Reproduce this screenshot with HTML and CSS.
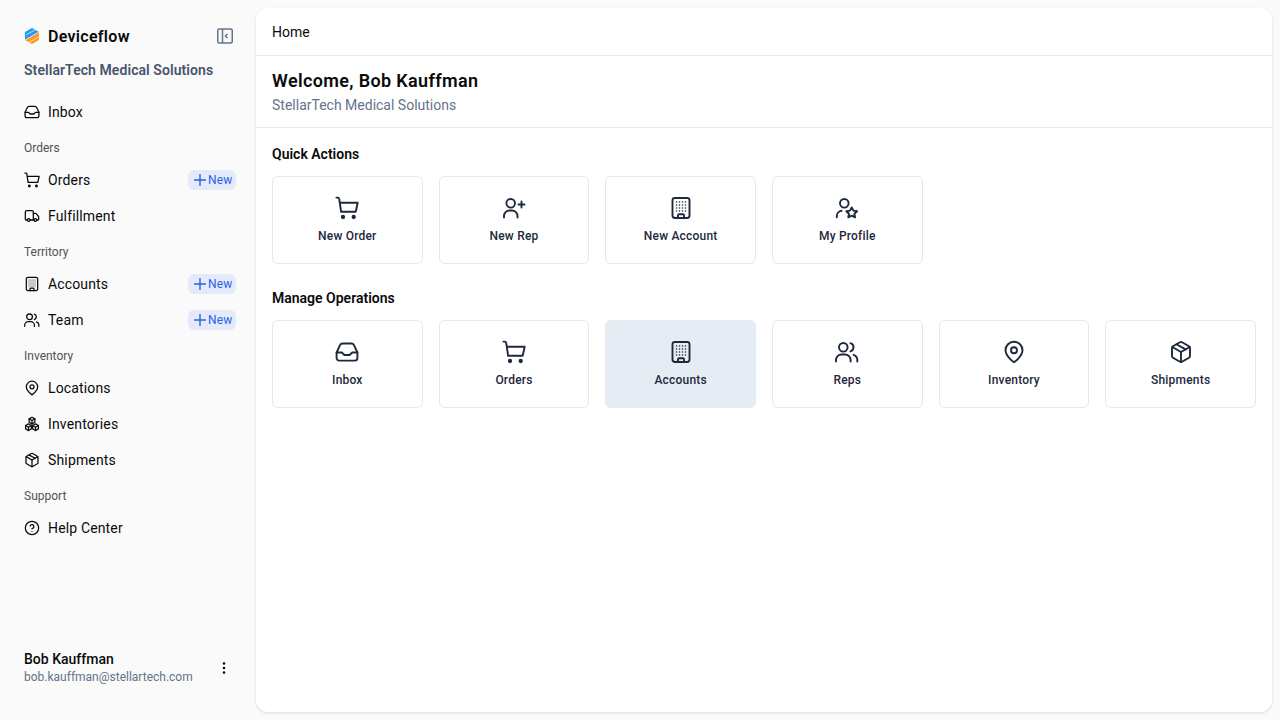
FILE: index.html
```html
<!DOCTYPE html>
<html lang="en">
<head>
    <meta charset="UTF-8">
    <title>Deviceflow</title>
    <link rel="stylesheet" href="styles.css">
</head>
<body>
    <svg class="sprites" width="0" height="0">
        <symbol id="i-cart" viewBox="0 0 24 24"><path d="M1.400 1.600h1.300c.8 0 1.400.5 1.500 1.300l1.900 12.800M4.800 6.700h17.900l-2 9H6"/><circle cx="8" cy="21" r="1.200" fill="currentColor"/><circle cx="18.700" cy="21" r="1.200" fill="currentColor"/></symbol>
        <symbol id="i-inbox" viewBox="0 0 24 24"><path d="M1.600 12.500 5 5.200a3 3 0 0 1 2.600-1.700h8.800A3 3 0 0 1 19 5.200l3.400 7.300V18a2.600 2.600 0 0 1-2.600 2.600H4.200A2.600 2.600 0 0 1 1.600 18z"/><path d="M1.600 12.500h5.200l2.600 2.500h5.200l2.600-2.500h5.200"/></symbol>
        <symbol id="i-truck" viewBox="0 0 24 24"><path d="M14 18V6a2 2 0 0 0-2-2H4a2 2 0 0 0-2 2v11a1 1 0 0 0 1 1h2"/><path d="M15 18H9"/><path d="M19 18h2a1 1 0 0 0 1-1v-3.650a1 1 0 0 0-.22-.624l-3.480-4.350A1 1 0 0 0 17.520 8H14"/><circle cx="17" cy="18" r="2"/><circle cx="7" cy="18" r="2"/></symbol>
        <symbol id="i-building" viewBox="0 0 24 24"><rect x="3.500" y="2" width="17" height="20" rx="2.400"/><path d="M9 22v-2.800a1 1 0 0 1 1-1h4a1 1 0 0 1 1 1V22"/><path class="dots" d="M7.500 6h.01M10.500 6h.01M13.500 6h.01M16.500 6h.01M7.500 9h.01M10.500 9h.01M13.500 9h.01M16.500 9h.01M7.500 12h.01M10.500 12h.01M13.500 12h.01M16.500 12h.01M7.500 15h.01M10.500 15h.01M13.500 15h.01M16.500 15h.01"/></symbol>
        <symbol id="i-users" viewBox="0 0 24 24"><circle cx="8.300" cy="7.300" r="4.300"/><path d="M1 21.500v-1.500a5.500 5.500 0 0 1 5.500-5.500h3.600a5.500 5.500 0 0 1 5.500 5.500v1.500"/><path d="M15.500 3.200a4.300 4.300 0 0 1 0 8.200"/><path d="M18.700 14.800a5.500 5.500 0 0 1 3.600 5.200v1.500"/></symbol>
        <symbol id="i-user-plus" viewBox="0 0 24 24"><circle cx="8.700" cy="7.300" r="4.300"/><path d="M2 21.500V20a5.500 5.500 0 0 1 5.500-5.500h2.500a5.500 5.500 0 0 1 5.500 5.500v1.500"/><path d="M19.500 5.500v6M16.500 8.500h6"/></symbol>
        <symbol id="i-user-star" viewBox="0 0 24 24"><circle cx="9.300" cy="7.300" r="4.300"/><path d="M1.800 21.300V20a5.300 5.300 0 0 1 4.700-5.200"/><path d="m16.700 11.400 1.700 3.200 3.700.6-2.700 2.500.7 3.600-3.400-1.700-3.400 1.700.7-3.600-2.700-2.500 3.700-.6z"/></symbol>
        <symbol id="i-pin" viewBox="0 0 24 24"><path d="M20.500 10.300c0 6-8.500 12-8.500 12s-8.500-6-8.500-12a8.500 8.500 0 0 1 17 0z"/><circle cx="12" cy="10.300" r="3"/></symbol>
        <symbol id="i-boxes" viewBox="0 0 24 24"><path d="m12 1.800 4.300 2.500v5l-4.300 2.500-4.300-2.500v-5z"/><path d="m6.700 11.800 4.300 2.500v5l-4.300 2.500-4.300-2.500v-5z"/><path d="m17.300 11.800 4.300 2.500v5l-4.300 2.500-4.300-2.500v-5z"/><path d="m7.700 4.300 4.300 2.500 4.300-2.500M12 6.800v5M2.400 14.300l4.300 2.500 4.300-2.500M6.700 16.800v5M13 14.300l4.300 2.500 4.300-2.500M17.300 16.800v5"/></symbol>
        <symbol id="i-package" viewBox="0 0 24 24"><path d="M11 21.730a2 2 0 0 0 2 0l7-4A2 2 0 0 0 21 16V8a2 2 0 0 0-1-1.730l-7-4a2 2 0 0 0-2 0l-7 4A2 2 0 0 0 3 8v8a2 2 0 0 0 1 1.730z"/><path d="M12 22V12"/><path d="m3.300 7 8.700 5 8.700-5"/><path d="m7.500 4.270 9 5.150"/></symbol>
        <symbol id="i-help" viewBox="0 0 24 24"><circle cx="12" cy="12" r="10"/><path d="M9.100 9a3 3 0 0 1 5.800 1c0 2-3 3-3 3"/><path d="M12 17h.01"/></symbol>
        <symbol id="i-plus" viewBox="0 0 12 12"><path class="thin" d="M6 .5v11M.5 6h11"/></symbol>
    </svg>

    <aside class="sidebar">
        <div class="brand">
            <svg class="logo" viewBox="0 0 16 16">
                <path fill="#1f9cf0" d="M8 0 15 4 1 12V4z"/>
                <path fill="#ff9a1f" d="M15 4v8l-7 4-7-4z"/>
                <path fill="none" stroke="#fafafa" stroke-width=".7" d="M0 12.600 16 3.400M2 7 13 .7M4 15l11-6.300"/>
            </svg>
            <span class="brand-name">Deviceflow</span>
            <svg class="collapse" viewBox="0 0 16 16">
                <rect x=".75" y="1" width="14.500" height="14" rx="1.500"/>
                <path d="M5.500 1v14M10.500 6 8.500 8l2 2"/>
            </svg>
        </div>
        <div class="org">StellarTech Medical Solutions</div>

        <nav class="nav">
            <a class="nav-item"><svg class="nav-icon"><use href="#i-inbox"/></svg>Inbox</a>
            <div class="nav-label">Orders</div>
            <a class="nav-item"><svg class="nav-icon"><use href="#i-cart"/></svg>Orders<span class="new"><svg class="plus"><use href="#i-plus"/></svg>New</span></a>
            <a class="nav-item"><svg class="nav-icon"><use href="#i-truck"/></svg>Fulfillment</a>
            <div class="nav-label">Territory</div>
            <a class="nav-item"><svg class="nav-icon"><use href="#i-building"/></svg>Accounts<span class="new"><svg class="plus"><use href="#i-plus"/></svg>New</span></a>
            <a class="nav-item"><svg class="nav-icon"><use href="#i-users"/></svg>Team<span class="new"><svg class="plus"><use href="#i-plus"/></svg>New</span></a>
            <div class="nav-label">Inventory</div>
            <a class="nav-item"><svg class="nav-icon"><use href="#i-pin"/></svg>Locations</a>
            <a class="nav-item"><svg class="nav-icon"><use href="#i-boxes"/></svg>Inventories</a>
            <a class="nav-item"><svg class="nav-icon"><use href="#i-package"/></svg>Shipments</a>
            <div class="nav-label">Support</div>
            <a class="nav-item"><svg class="nav-icon"><use href="#i-help"/></svg>Help Center</a>
        </nav>

        <div class="user">
            <div class="user-text">
                <div class="user-name">Bob Kauffman</div>
                <div class="user-email">bob.kauffman@stellartech.com</div>
            </div>
            <svg class="kebab" viewBox="0 0 16 16"><circle cx="8" cy="3.500" r="1.250"/><circle cx="8" cy="8" r="1.250"/><circle cx="8" cy="12.500" r="1.250"/></svg>
        </div>
    </aside>

    <main class="panel">
        <header class="crumb">Home</header>
        <section class="welcome">
            <h1>Welcome, Bob Kauffman</h1>
            <p>StellarTech Medical Solutions</p>
        </section>
        <div class="content">
            <h2>Quick Actions</h2>
            <div class="grid">
                <a class="card"><svg class="card-icon"><use href="#i-cart"/></svg>New Order</a>
                <a class="card"><svg class="card-icon"><use href="#i-user-plus"/></svg>New Rep</a>
                <a class="card"><svg class="card-icon"><use href="#i-building"/></svg>New Account</a>
                <a class="card"><svg class="card-icon"><use href="#i-user-star"/></svg>My Profile</a>
            </div>
            <h2 class="second">Manage Operations</h2>
            <div class="grid">
                <a class="card"><svg class="card-icon"><use href="#i-inbox"/></svg>Inbox</a>
                <a class="card"><svg class="card-icon"><use href="#i-cart"/></svg>Orders</a>
                <a class="card active"><svg class="card-icon"><use href="#i-building"/></svg>Accounts</a>
                <a class="card"><svg class="card-icon"><use href="#i-users"/></svg>Reps</a>
                <a class="card"><svg class="card-icon"><use href="#i-pin"/></svg>Inventory</a>
                <a class="card"><svg class="card-icon"><use href="#i-package"/></svg>Shipments</a>
            </div>
        </div>
    </main>
</body>
</html>
```

FILE: styles.css
```css
* {
    margin: 0;
    padding: 0;
    box-sizing: border-box;
}

body {
    height: 720px;
    display: flex;
    overflow: hidden;
    background-color: #fafafa;
    color: #0a0a0a;
    font-family: "Roboto", "Liberation Sans", sans-serif;
    font-size: 14px;
}

.sprites {
    position: absolute;
}

symbol {
    overflow: visible;
}

symbol path,
symbol circle,
symbol rect {
    stroke-width: 1.9;
    stroke-linecap: round;
    stroke-linejoin: round;
}

symbol .dots {
    stroke-width: 1.6;
}

symbol .thin {
    stroke-width: 1.4;
}

/* sidebar */
.sidebar {
    width: 256px;
    flex-shrink: 0;
    display: flex;
    flex-direction: column;
    padding: 24px 20px 34px 24px;
}

.brand {
    height: 24px;
    display: flex;
    align-items: center;
    gap: 8px;
}

.logo {
    width: 16px;
    height: 16px;
}

.brand-name {
    font-size: 16px;
    font-weight: 600;
    letter-spacing: 0.3px;
}

.collapse {
    width: 16px;
    height: 16px;
    margin-left: auto;
    margin-right: 3px;
    fill: none;
    stroke: #64748b;
    stroke-width: 1.5;
}

.org {
    margin-top: 12px;
    line-height: 20px;
    font-weight: 600;
    letter-spacing: 0.07px;
    color: #475569;
}

.nav {
    margin-top: 14px;
    display: flex;
    flex-direction: column;
}

.nav-item {
    height: 36px;
    display: flex;
    align-items: center;
    gap: 8px;
    letter-spacing: 0.15px;
}

.nav-icon {
    width: 16px;
    height: 16px;
    fill: none;
    stroke: #0a0a0a;
}

.nav-label {
    height: 28px;
    margin-top: 4px;
    display: flex;
    align-items: center;
    font-size: 12px;
    color: #525252;
}

.new {
    width: 48px;
    height: 20px;
    margin-left: auto;
    padding-left: 6px;
    display: flex;
    align-items: center;
    gap: 2px;
    border-radius: 6px;
    background-color: #e4eafa;
    color: #2563eb;
    font-size: 12px;
}

.plus {
    width: 12px;
    height: 12px;
    fill: none;
    stroke: #2563eb;
}

.user {
    margin-top: auto;
    display: flex;
    align-items: center;
    justify-content: space-between;
}

.user-name {
    line-height: 18px;
    font-weight: 500;
}

.user-email {
    line-height: 18px;
    font-size: 12px;
    color: #64748b;
}

.kebab {
    width: 16px;
    height: 16px;
    fill: #0a0a0a;
    margin-right: 4px;
}

/* main panel */
.panel {
    flex: 1;
    margin: 8px 8px 8px 0;
    border-radius: 12px;
    background-color: #fff;
    box-shadow: 0 1px 3px rgba(0, 0, 0, 0.12);
}

.crumb {
    height: 48px;
    padding: 0 16px;
    display: flex;
    align-items: center;
    border-bottom: 1px solid #e2e8f0;
}

.welcome {
    height: 72px;
    padding: 11px 16px 0;
    border-bottom: 1px solid #e2e8f0;
}

.welcome h1 {
    font-size: 18px;
    line-height: 28px;
    font-weight: 600;
    letter-spacing: 0.35px;
}

.welcome p {
    line-height: 21px;
    color: #64748b;
}

.content {
    padding: 16px;
}

h2 {
    font-size: 14px;
    line-height: 20px;
    font-weight: 600;
}

h2.second {
    margin-top: 24px;
}

.grid {
    margin-top: 12px;
    display: grid;
    grid-template-columns: repeat(6, 1fr);
    gap: 16px;
}

.card {
    height: 88px;
    padding-top: 19px;
    display: flex;
    flex-direction: column;
    align-items: center;
    gap: 8px;
    border: 1px solid #e2e8f0;
    border-radius: 6px;
    font-size: 12px;
    line-height: 16px;
    font-weight: 500;
    letter-spacing: 0.2px;
    color: #1e293b;
}

.card.active {
    background-color: #e6ecf4;
    border-color: #e6ecf4;
}

.card-icon {
    width: 24px;
    height: 24px;
    fill: none;
    stroke: #1e293b;
}
```
